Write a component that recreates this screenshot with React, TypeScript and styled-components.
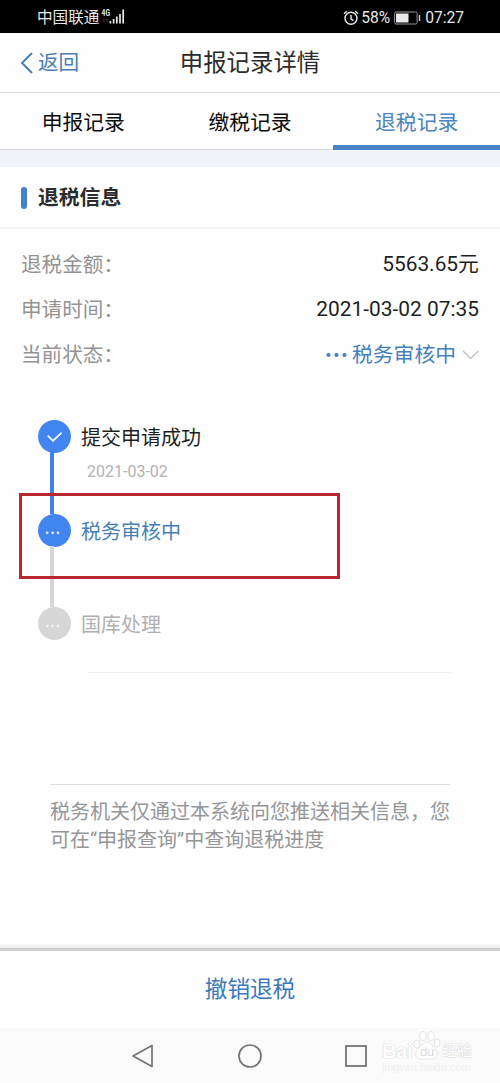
import React from 'react';
import styled, { createGlobalStyle } from 'styled-components';

const GlobalStyle = createGlobalStyle`
    * {
        box-sizing: border-box;
    }
    body {
        margin: 0;
        background: #fefefe;
        font-family: Roboto, "Noto Sans CJK SC", sans-serif;
    }
`;

const Page = styled.div`
    position: relative;
    display: flex;
    flex-direction: column;
    width: 500px;
    height: 1083px;
    overflow: hidden;
    background: #fefefe;
`;

const StatusBar = styled.div`
    display: flex;
    flex: none;
    align-items: center;
    justify-content: space-between;
    height: 33px;
    padding: 2px 36px 0 37px;
    background: #000;
    color: #e8e8e8;
    font-size: 15.6px;
    line-height: 20px;
`;

const StatusGroup = styled.div`
    display: flex;
    align-items: center;
`;

const BatteryLevel = styled.span`
    margin-left: 2px;
`;

const Battery = styled.svg`
    margin: 0 4px 0 4px;
`;

const Header = styled.header`
    display: grid;
    flex: none;
    grid-template-columns: 1fr auto 1fr;
    align-items: center;
    height: 60px;
    padding: 0 20px;
    border-bottom: 1px solid #d9d9d9;
`;

const BackButton = styled.div`
    display: flex;
    align-items: center;
    gap: 5px;
    color: #4a7fb5;
    font-size: 20.6px;
    line-height: 30px;
`;

const Title = styled.h1`
    margin: 0;
    padding-top: 1px;
    color: #2b2b2b;
    font-size: 23.4px;
    font-weight: 400;
    line-height: 34px;
`;

const Tabs = styled.nav`
    display: grid;
    flex: none;
    grid-template-columns: repeat(3, 1fr);
    height: 57px;
`;

const Tab = styled.div<{ $active?: boolean }>`
    display: flex;
    align-items: center;
    justify-content: center;
    padding-top: ${(props) => (props.$active ? '7px' : '3px')};
    border-bottom: ${(props) => (props.$active ? '5px solid #4a83c6' : '1px solid #d8d8de')};
    color: ${(props) => (props.$active ? '#4a83c0' : '#0c0c0c')};
    font-size: 20.8px;
    line-height: 30px;
`;

const Gap = styled.div`
    flex: none;
    height: 17px;
    background: #f3f4f9;
`;

const SectionTitle = styled.h2`
    display: flex;
    flex: none;
    align-items: center;
    gap: 11px;
    height: 62px;
    margin: 0;
    padding: 1px 0 0 21px;
    border-bottom: 2px solid #f3f3f3;
    color: #2c2c2c;
    font-size: 20.8px;
    font-weight: 700;
    line-height: 30px;

    &::before {
        content: "";
        width: 6px;
        height: 22px;
        border-radius: 3px;
        background: #4580cf;
    }
`;

const InfoList = styled.div`
    flex: none;
    padding: 12px 21px 0 22px;
`;

const InfoRow = styled.div`
    display: flex;
    align-items: center;
    justify-content: space-between;
    height: 45px;
    font-size: 20.6px;
    line-height: 30px;
`;

const Label = styled.span`
    padding-top: 2px;
    margin-left: -1px;
    color: #939393;
`;

const Value = styled.span`
    color: #1e1e1e;
    font-size: 20.9px;
`;

const StatusValue = styled.span`
    display: flex;
    align-items: center;
    padding-top: 2px;
    color: #4580bd;
    font-size: 20.8px;
`;

const Timeline = styled.div`
    position: relative;
    flex: none;
    height: 224px;
    margin-top: 44px;
    padding-left: 38px;
`;

const Step = styled.div`
    display: grid;
    grid-template-columns: 33px 1fr;
    column-gap: 10px;
    height: 93.5px;
`;

const StepRail = styled.div<{ $color?: string }>`
    display: flex;
    flex-direction: column;
    align-items: center;

    &::after {
        content: "";
        flex: 1;
        width: 4px;
        margin: -1px 5px 0 0;
        background: ${(props) => props.$color || 'transparent'};
    }
`;

const Dot = styled.svg`
    flex: none;
    display: block;
`;

const StepName = styled.div<{ $color: string }>`
    color: ${(props) => props.$color};
    font-size: 20px;
    line-height: 36px;
`;

const StepDate = styled.div`
    padding: 6px 0 0 6px;
    color: #b2b2b2;
    font-size: 16px;
    line-height: 20px;
`;

const Highlight = styled.div`
    position: absolute;
    top: 73px;
    left: 19px;
    width: 321px;
    height: 86px;
    border: 3px solid #b9262f;
`;

const Divider = styled.div`
    flex: none;
    height: 1px;
    margin: 28px 49px 0 87px;
    background: #f0f0f0;
`;

const Notice = styled.p`
    flex: none;
    width: 400px;
    margin: 111px 0 0 50px;
    padding-top: 13px;
    border-top: 1px solid #dedede;
    color: #949698;
    font-size: 20px;
    line-height: 28px;
    white-space: nowrap;
`;

const Footer = styled.footer`
    display: flex;
    flex: none;
    flex-direction: column;
    margin-top: auto;

    &::before {
        content: "";
        height: 8px;
        background: linear-gradient(#fefefe, #ececec 60%, #cacaca 62%, #d0d0d0);
    }
`;

const RevokeButton = styled.div`
    display: flex;
    align-items: center;
    justify-content: center;
    height: 77px;
    padding-bottom: 5px;
    color: #3b79bb;
    font-size: 22.6px;
`;

const NavBar = styled.div`
    display: flex;
    align-items: center;
    height: 55px;
    padding: 0 0 0 131px;
    gap: 82px;
    background: #fafafa;
`;

const Watermark = styled.div`
    position: absolute;
    left: 382px;
    top: 1028px;
    width: 92px;
    height: 46px;
    color: #fff;
    font-family: "Liberation Sans", "Noto Sans CJK SC", sans-serif;
    text-shadow: 0 0 1px #c4c4c4, 0 0 1px #d4d4d4;
`;

const WatermarkLogo = styled.div`
    display: flex;
    align-items: center;
    height: 41px;
    padding-top: 5px;
    font-size: 20px;
    font-weight: 700;
    letter-spacing: -0.3px;
    line-height: 24px;
`;

const Paw = styled.svg`
    flex: none;
    margin: -12px 0 0 1px;
    text-shadow: none;
`;

const WatermarkCn = styled.span`
    margin-left: 1px;
    font-size: 15px;
    font-weight: 500;
`;

const WatermarkUrl = styled.div`
    margin-top: -8px;
    color: #f0f0f0;
    font-size: 11px;
    line-height: 12px;
    white-space: nowrap;
    text-shadow: none;
`;

const SignalIcon = () => (
    <svg width="26" height="20" viewBox="0 0 26 20">
        <text x="2.5" y="7.5" fill="#e8e8e8" fontSize="8.5" fontWeight="700" textLength="8.5" lengthAdjust="spacingAndGlyphs">4G</text>
        <path d="M5 10v4M8 10v4" stroke="#444" />
        <path d="M11.4 13v2.5M14.6 11v4.5M17.8 8.5v7M21 6v9.5M24.2 1.5v14" stroke="#e8e8e8" strokeWidth="1.7" />
    </svg>
);

const AlarmIcon = () => (
    <svg width="16" height="16" viewBox="0 0 16 16" fill="none" stroke="#e8e8e8" strokeWidth="1.4">
        <circle cx="8" cy="8.3" r="6" />
        <path d="M8 5v3.8l2.3 1.8M1 3.8l2.8-2.6M15 3.8L12.2 1.2" />
    </svg>
);

const DotBase = ({ color, done, faint }: { color: string; done?: boolean; faint?: boolean }) => (
    <Dot width="33" height="33" viewBox="0 0 33 33">
        <circle cx="16.5" cy="16.5" r="16.5" fill={color} />
        {done ? (
            <path d="M9.7 15.6l5.3 5.2 8.6-8.2" fill="none" stroke="#fff" strokeWidth="1.7" />
        ) : (
            <g fill={faint ? '#f0f0f0' : '#e4edff'}>
                <circle cx="9.2" cy="18.8" r="1.35" />
                <circle cx="14.6" cy="18.8" r="1.35" />
                <circle cx="20" cy="18.8" r="1.35" />
            </g>
        )}
    </Dot>
);

const App = () => {
    return (
        <Page>
            <GlobalStyle />
            <StatusBar>
                <StatusGroup>
                    中国联通
                    <SignalIcon />
                </StatusGroup>
                <StatusGroup>
                    <AlarmIcon />
                    <BatteryLevel>58%</BatteryLevel>
                    <Battery width="27" height="14" viewBox="0 0 27 14">
                        <rect x=".6" y="1" width="22.5" height="12" rx="1.5" fill="none" stroke="#999" />
                        <rect x="2" y="2.5" width="12.5" height="9" fill="#e8e8e8" />
                        <path d="M25.5 4v6" stroke="#ccc" strokeWidth="1.4" />
                    </Battery>
                    07:27
                </StatusGroup>
            </StatusBar>
            <Header>
                <BackButton>
                    <svg width="13" height="22" viewBox="0 0 13 22">
                        <path d="M12 1L2 11l10 10" fill="none" stroke="#4a7fb5" strokeWidth="2" />
                    </svg>
                    返回
                </BackButton>
                <Title>申报记录详情</Title>
            </Header>
            <Tabs>
                <Tab>申报记录</Tab>
                <Tab>缴税记录</Tab>
                <Tab $active>退税记录</Tab>
            </Tabs>
            <Gap />
            <SectionTitle>退税信息</SectionTitle>
            <InfoList>
                <InfoRow>
                    <Label>退税金额：</Label>
                    <Value>5563.65元</Value>
                </InfoRow>
                <InfoRow>
                    <Label>申请时间：</Label>
                    <Value>2021-03-02 07:35</Value>
                </InfoRow>
                <InfoRow>
                    <Label>当前状态：</Label>
                    <StatusValue>
                        <svg width="26" height="6" viewBox="0 0 26 6" fill="#4580bd">
                            <circle cx="2.5" cy="3" r="2.1" />
                            <circle cx="10.5" cy="3" r="2.1" />
                            <circle cx="18.5" cy="3" r="2.1" />
                        </svg>
                        税务审核中
                        <svg width="23" height="12" viewBox="0 0 23 12">
                            <path d="M7 2l7.7 7.5L22.4 2" fill="none" stroke="#c4c4c4" strokeWidth="1.4" />
                        </svg>
                    </StatusValue>
                </InfoRow>
            </InfoList>
            <Timeline>
                <Step>
                    <StepRail $color="#4080ec">
                        <DotBase color="#4285f0" done />
                    </StepRail>
                    <div>
                        <StepName $color="#1e1e1e">提交申请成功</StepName>
                        <StepDate>2021-03-02</StepDate>
                    </div>
                </Step>
                <Step>
                    <StepRail $color="#d6d6d6">
                        <DotBase color="#4285f0" />
                    </StepRail>
                    <StepName $color="#4580b5">税务审核中</StepName>
                </Step>
                <Step>
                    <StepRail>
                        <DotBase color="#d6d6d6" faint />
                    </StepRail>
                    <StepName $color="#b0b0b0">国库处理</StepName>
                </Step>
                <Highlight />
            </Timeline>
            <Divider />
            <Notice>
                税务机关仅通过本系统向您推送相关信息，您
                <br />
                可在“申报查询”中查询退税进度
            </Notice>
            <Footer>
                <RevokeButton>撤销退税</RevokeButton>
                <NavBar>
                    <svg width="24" height="26" viewBox="0 0 24 26">
                        <path d="M21 2.5v21L2 13z" fill="none" stroke="#747474" strokeWidth="1.7" strokeLinejoin="round" />
                    </svg>
                    <svg width="26" height="26" viewBox="0 0 26 26">
                        <circle cx="13" cy="13" r="11" fill="none" stroke="#747474" strokeWidth="1.7" />
                    </svg>
                    <svg width="24" height="24" viewBox="0 0 24 24">
                        <rect x="1" y="2" width="20" height="20" fill="none" stroke="#747474" strokeWidth="1.8" />
                    </svg>
                </NavBar>
            </Footer>
            <Watermark>
                <WatermarkLogo>
                    Bai
                    <Paw width="28" height="31" viewBox="0 0 28 31" fill="#fff" stroke="#e0e0e0" strokeWidth=".9">
                        <ellipse cx="4" cy="14" rx="3" ry="4" />
                        <ellipse cx="10" cy="6" rx="3.2" ry="4.4" />
                        <ellipse cx="18" cy="6" rx="3.2" ry="4.4" />
                        <ellipse cx="24" cy="13" rx="3" ry="4" />
                        <path d="M14 12c4 0 5 4 8 7s4 10-3 10H8c-7 0-6-7-3-10s5-7 9-7z" />
                        <text x="7" y="26" fontSize="13" fontWeight="400" fill="#dadada" stroke="none">du</text>
                    </Paw>
                    <WatermarkCn>经验</WatermarkCn>
                </WatermarkLogo>
                <WatermarkUrl>jingyan.baidu.com</WatermarkUrl>
            </Watermark>
        </Page>
    );
}

export default App;
